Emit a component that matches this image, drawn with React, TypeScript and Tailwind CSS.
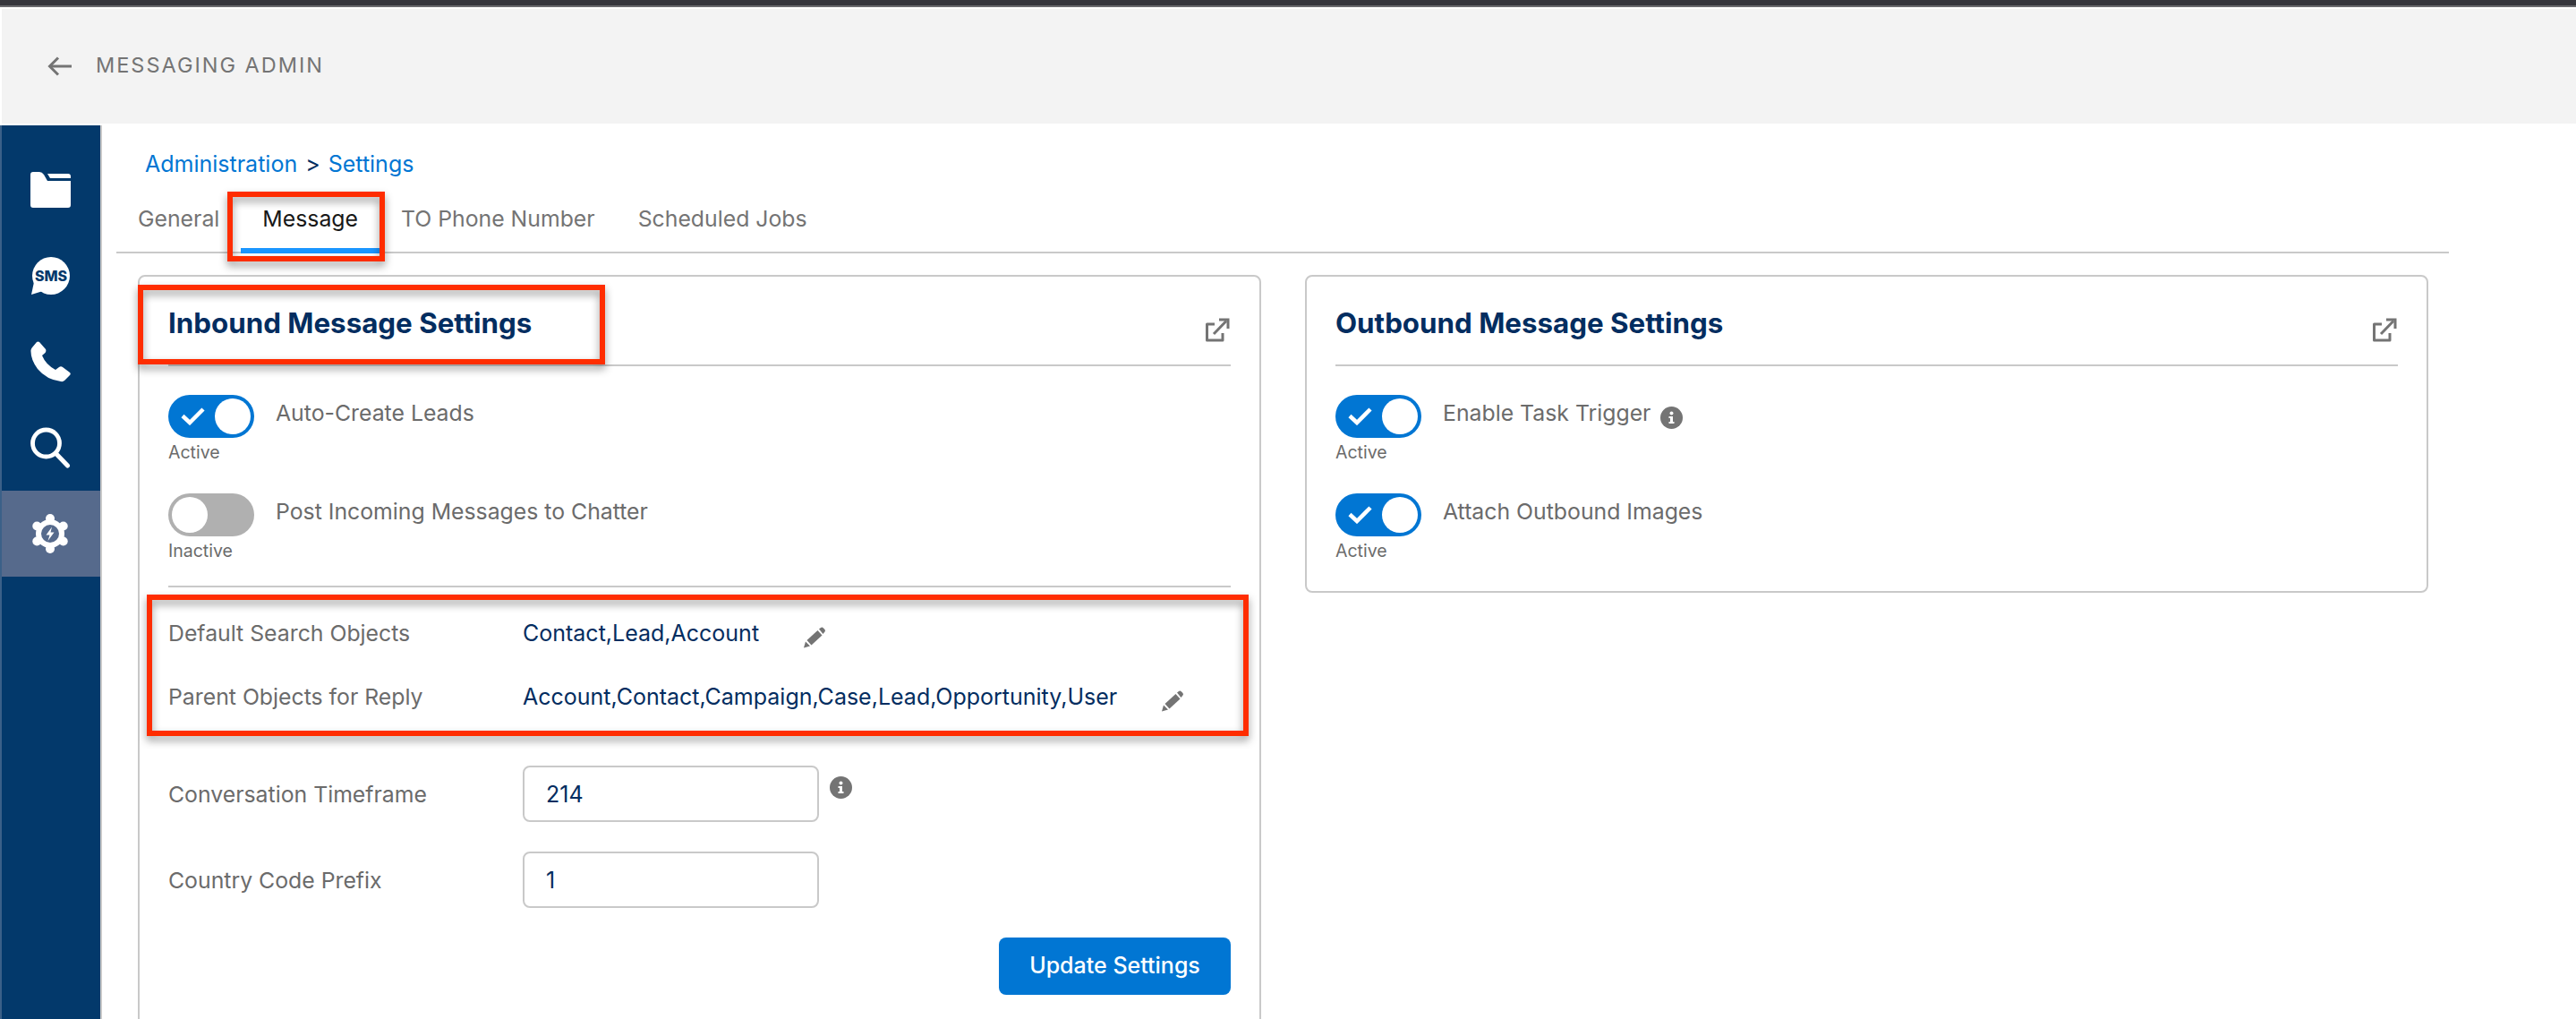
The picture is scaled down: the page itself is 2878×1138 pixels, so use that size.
import type { ReactNode } from 'react'

const navy = '#032d60'

function FolderIcon() {
  return (
    <svg width="45" height="40" viewBox="0 0 45 40" fill="#fff">
      <path d="M3 0H10Q13 0 15 3L19 10H45V37Q45 40 42 40H3Q0 40 0 37V3Q0 0 3 0Z" />
      <path d="M19 2H42Q45 2 45 5V7H22Z" />
    </svg>
  )
}

function SmsIcon() {
  return (
    <svg width="45" height="43" viewBox="0 0 45 43">
      <circle cx="23" cy="21" r="21" fill="#fff" />
      <path d="M1 42L4 28L14 38Z" fill="#fff" />
      <text x="23" y="27" textAnchor="middle" fontSize="16" fontWeight="800" fill="#03396b" fontFamily="Inter, sans-serif">SMS</text>
    </svg>
  )
}

function PhoneIcon() {
  return (
    <svg width="45" height="46" viewBox="0 0 45 46" fill="#fff">
      <path d="M10 1L17 9Q18 11 16.5 13L13 16Q17 26 28 32L32 29Q34 27.5 36 29L44 35Q45.5 36.5 44 38L38 44Q36.5 45.5 34 45Q18 43 8 31Q0 20 .5 10Q1 8 2 7L7 1Q8.5 0 10 1Z" />
    </svg>
  )
}

function SearchIcon() {
  return (
    <svg width="45" height="46" viewBox="0 0 45 46" fill="none" stroke="#fff">
      <circle cx="17.5" cy="18" r="15" strokeWidth="4.8" />
      <path d="M28 29L41.5 43" strokeWidth="5" strokeLinecap="round" />
    </svg>
  )
}

function GearIcon() {
  const lobes = [0, 60, 120, 180, 240, 300]
  return (
    <svg width="40" height="44" viewBox="0 0 40 44" fill="#fff">
      <circle cx="20" cy="22" r="16" />
      {lobes.map((a) => (
        <circle
          key={a}
          cx={20 + 17 * Math.sin((a * Math.PI) / 180)}
          cy={22 - 17 * Math.cos((a * Math.PI) / 180)}
          r="5"
        />
      ))}
      <circle cx="20" cy="22" r="10" fill="#566a8c" />
      <path d="M22 14.5L15.5 23.5H19.5L17.5 30L24.5 20.5H20.5Z" />
    </svg>
  )
}

function ExternalIcon() {
  return (
    <svg width="30" height="30" viewBox="0 0 30 30" fill="none" stroke="#747474" strokeWidth="3">
      <path d="M12 9H3.5V27H21V19" strokeLinejoin="round" />
      <path d="M11 20L25 5.5" />
      <path d="M17 4H27V14" />
    </svg>
  )
}

function PencilIcon() {
  return (
    <svg width="26" height="24" viewBox="0 0 26 24" fill="#747474">
      <path d="M0 23.5L2 16.5L7 21.5Z" />
      <path d="M3.5 15L15.5 4L20.5 9.5L8.5 20.5Z" />
      <path d="M17 2.5L19 1Q20.5 0 22 1.5L23.5 3Q24.5 4.5 23.5 5.5L21.5 8Z" />
    </svg>
  )
}

function InfoIcon() {
  return (
    <svg width="25" height="25" viewBox="0 0 25 25">
      <circle cx="12.5" cy="12.5" r="12.5" fill="#747474" />
      <circle cx="12.5" cy="7.5" r="2" fill="#fff" />
      <path d="M9.5 11H14V17H15.5V19H9.5V17H11V13H9.5Z" fill="#fff" />
    </svg>
  )
}

function Toggle({ on }: { on: boolean }) {
  return (
    <div className="w-[120px] shrink-0">
      <div
        className={
          on
            ? 'flex h-[48px] w-[96px] items-center justify-end rounded-full bg-[#0176d3] p-[4px]'
            : 'flex h-[48px] w-[96px] items-center rounded-full bg-[#b0b0b0] p-[4px]'
        }
      >
        {on && (
          <svg className="mr-[11px]" width="27" height="20" viewBox="0 0 27 20" fill="none" stroke="#fff" strokeWidth="4.5">
            <path d="M2 9.5L10 17L25 2" />
          </svg>
        )}
        <div className="h-[40px] w-[40px] rounded-full bg-white" />
      </div>
      <div className="mt-[4px] text-[19.5px] leading-[24px] text-[#6b6b6b]">{on ? 'Active' : 'Inactive'}</div>
    </div>
  )
}

function ToggleRow({ on, label, info }: { on: boolean; label: string; info?: boolean }) {
  return (
    <div className="flex h-[78px]">
      <Toggle on={on} />
      <div className="flex h-[42px] items-center text-[24.8px] text-[#6b6b6b]">
        {label}
        {info && (
          <span className="ml-[11px] mt-[8px]">
            <InfoIcon />
          </span>
        )}
      </div>
    </div>
  )
}

function RedBox({ className }: { className: string }) {
  return (
    <div
      className={
        'pointer-events-none absolute border-[6px] border-[#ff2d00] drop-shadow-[0_5px_5px_rgba(0,0,0,0.4)] ' + className
      }
    />
  )
}

function CardHead({ title, children }: { title: string; children?: ReactNode }) {
  return (
    <div className="relative flex h-[100px] items-center justify-between border-b-2 border-[#c9c9c9]">
      <h2 className="mt-[8px] text-[31.3px] font-bold leading-none" style={{ color: navy }}>{title}</h2>
      <span className="mt-[20px]">
        <ExternalIcon />
      </span>
      {children}
    </div>
  )
}

function ObjectRow({ label, value, iconGap }: { label: string; value: string; iconGap: string }) {
  return (
    <div className="flex h-[71px] items-center text-[25px]">
      <div className="w-[396px] text-[24.8px] text-[#6b6b6b]">{label}</div>
      <div className="text-[#032d60]">{value}</div>
      <span className={iconGap + ' mt-[8px]'}>
        <PencilIcon />
      </span>
    </div>
  )
}

function InputRow({ label, value, info }: { label: string; value: string; info?: boolean }) {
  return (
    <div className="flex h-[63px] items-center text-[25px]">
      <div className="mt-[2px] w-[396px] text-[24.8px] text-[#6b6b6b]">{label}</div>
      <input
        readOnly
        value={value}
        className="h-[63px] w-[331px] rounded-[8px] border-2 border-[#c9c9c9] px-[24px] text-[#032d60] outline-none"
      />
      {info && (
        <span className="mb-[14px] ml-[12px]">
          <InfoIcon />
        </span>
      )}
    </div>
  )
}

const navIcons = [FolderIcon, SmsIcon, PhoneIcon, SearchIcon]
const tabs = ['General', 'Message', 'TO Phone Number', 'Scheduled Jobs']

export default function App() {
  return (
    <div className="flex h-[1138px] w-[2878px] flex-col overflow-hidden bg-white font-['Inter',sans-serif]">
      <div className="h-[6px] shrink-0 bg-[#36363c]" />
      <div className="h-[2px] shrink-0 bg-[#6a6a6e]" />
      <div className="h-[2px] shrink-0 bg-white" />
      <div className="mb-[2px] ml-[2px] flex h-[128px] shrink-0 items-center bg-[#f3f3f3] pl-[51px]">
        <svg width="27" height="22" viewBox="0 0 27 22" fill="none" stroke="#747474" strokeWidth="3">
          <path d="M27 11H3" />
          <path d="M12 1.5L2.5 11L12 20.5" />
        </svg>
        <span className="mb-[2px] ml-[27px] text-[23.5px] tracking-[0.085em] text-[#747474]">MESSAGING ADMIN</span>
      </div>

      <div className="flex min-h-0 flex-1">
        <aside className="w-[114px] shrink-0 border-l-2 border-r-2 border-l-[#3b6088] border-r-[#c9c9c9] bg-[#03396b] pt-[24px]">
          {navIcons.map((Icon, i) => (
            <div key={i} className="flex h-[96px] items-center pl-[32px]">
              <Icon />
            </div>
          ))}
          <div className="flex h-[96px] items-center bg-[#566a8c] pl-[34px]">
            <GearIcon />
          </div>
        </aside>

        <main className="min-w-0 flex-1">
          <div className="mt-[30px] flex h-[28px] items-center pl-[48px] text-[25px] text-[#0176d3]">
            Administration
            <span className="mx-[9px] text-[#032d60]">&gt;</span>
            Settings
          </div>

          <div className="ml-[16px] mt-[8px] flex h-[77px] w-[2606px] border-b-2 border-[#c9c9c9] text-[24.8px]">
            {tabs.map((t) =>
              t === 'Message' ? (
                <div key={t} className="relative h-[77px] border-b-[6px] border-[#1b96ff] px-[24px] pt-[24px] leading-[28px] text-[#181818]">
                  {t}
                  <RedBox className="-left-[15px] -right-[6px] top-[8px] -bottom-[15px]" />
                </div>
              ) : (
                <div key={t} className="h-[75px] px-[24px] pt-[24px] leading-[28px] text-[#747474]">
                  {t}
                </div>
              ),
            )}
          </div>

          <div className="ml-[40px] mt-[24px] flex items-start gap-[49px]">
            <section className="w-[1255px] shrink-0 rounded-[8px] border-2 border-[#c9c9c9] px-[32px]">
              <CardHead title="Inbound Message Settings">
                <RedBox className="-left-[34px] top-[9px] h-[89px] w-[522px]" />
              </CardHead>
              <div className="mt-[32px] flex flex-col gap-[32px]">
                <ToggleRow on label="Auto-Create Leads" />
                <ToggleRow on={false} label="Post Incoming Messages to Chatter" />
              </div>
              <div className="relative mt-[25px] h-[168px] border-y-2 border-[#c9c9c9] pt-[16px]">
                <ObjectRow label="Default Search Objects" value="Contact,Lead,Account" iconGap="ml-[50px]" />
                <ObjectRow label="Parent Objects for Reply" value="Account,Contact,Campaign,Case,Lead,Opportunity,User" iconGap="ml-[50px]" />
                <RedBox className="-left-[24px] -right-[20px] top-[8px] -bottom-[2px]" />
              </div>
              <div className="mt-[33px] flex flex-col gap-[33px]">
                <InputRow label="Conversation Timeframe" value="214" info />
                <InputRow label="Country Code Prefix" value="1" />
              </div>
              <div className="mb-[80px] mt-[33px] flex justify-end">
                <button className="h-[64px] w-[259px] rounded-[8px] bg-[#0176d3] text-[25px] font-medium text-white">
                  Update Settings
                </button>
              </div>
            </section>

            <section className="w-[1255px] shrink-0 rounded-[8px] border-2 border-[#c9c9c9] px-[32px] pb-[31px]">
              <CardHead title="Outbound Message Settings" />
              <div className="mt-[32px] flex flex-col gap-[32px]">
                <ToggleRow on label="Enable Task Trigger" info />
                <ToggleRow on label="Attach Outbound Images" />
              </div>
            </section>
          </div>
        </main>
      </div>
    </div>
  )
}
